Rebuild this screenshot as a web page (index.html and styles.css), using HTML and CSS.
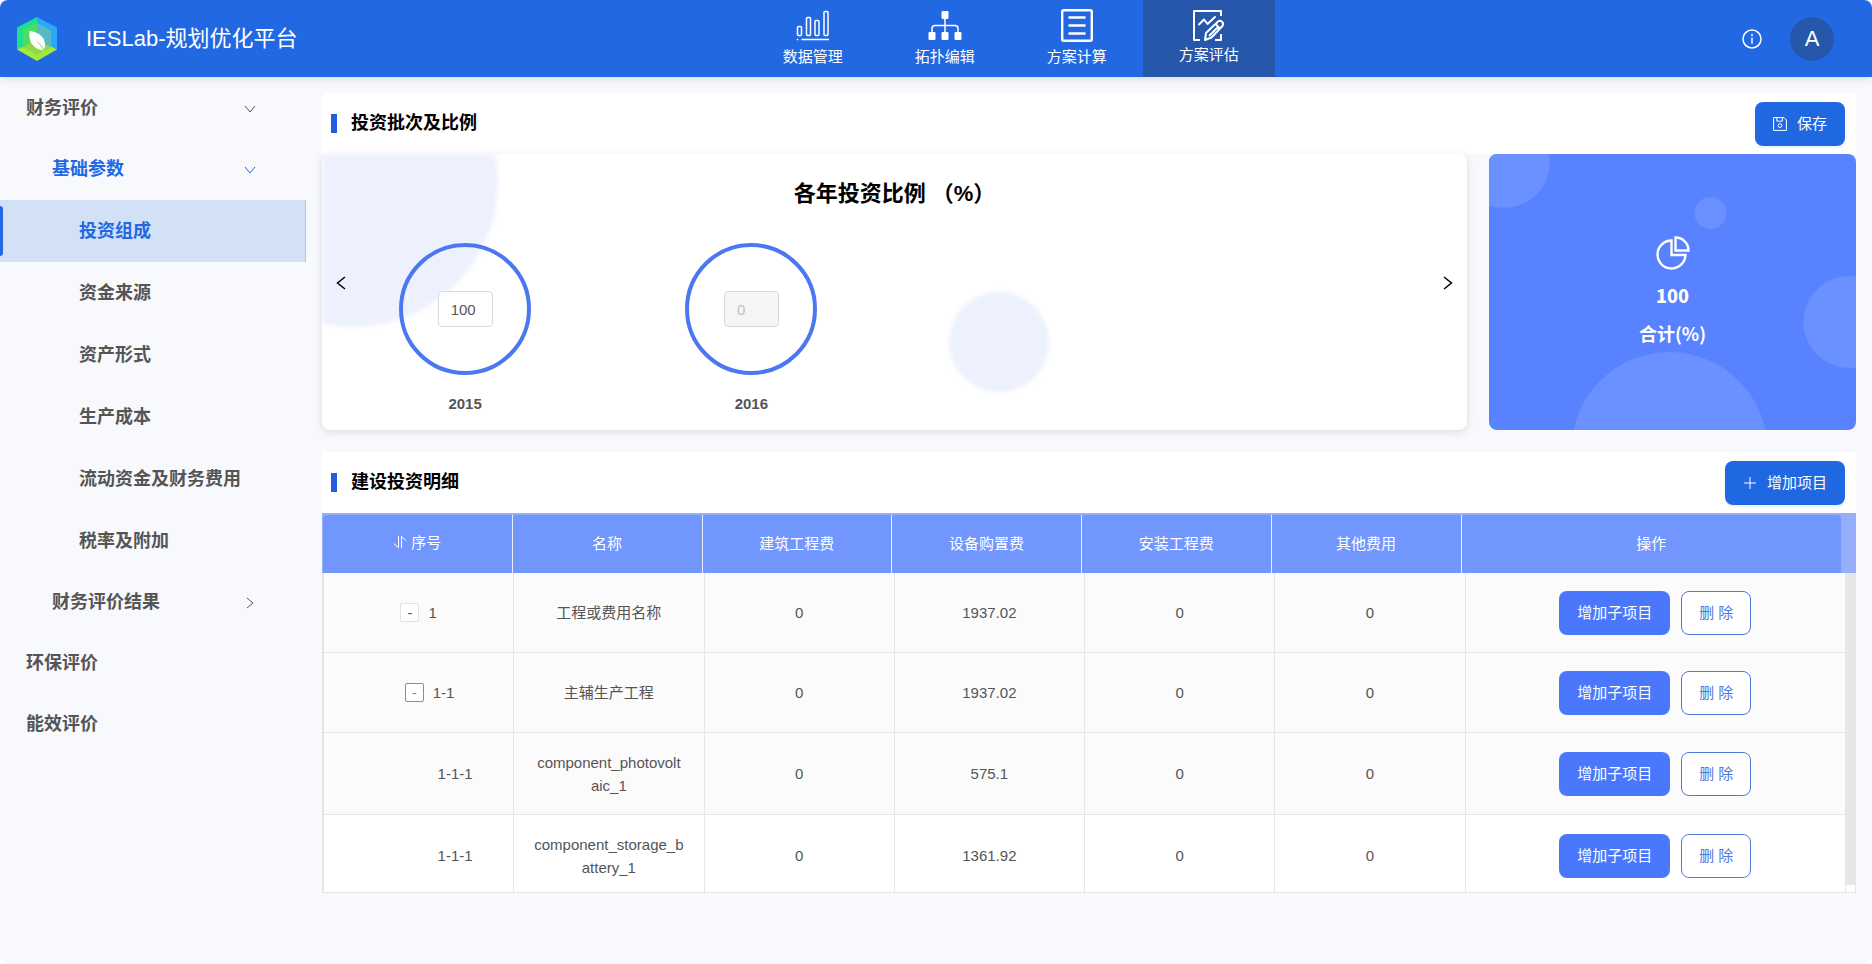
FILE: index.html
```html
<!DOCTYPE html>
<html lang="zh-CN">
<head>
<meta charset="utf-8">
<title>IESLab-规划优化平台</title>
<meta name="viewport" content="width=device-width, initial-scale=1">
<link rel="stylesheet" href="styles.css">
</head>
<body>
<div class="app">
  <header class="topbar">
    <a class="brand" href="#">
      <svg class="brand-logo" viewBox="0 0 40 44" aria-hidden="true">
        <path fill="#1fe08a" d="M20 0 0 10.500v22L20 22z"/>
        <path fill="#2aa9fb" d="M20 0l20 10.500v22L20 22z"/>
        <path fill="#a4ea3c" d="M0 32.500 20 22l20 10.500L20 44z"/>
        <path fill="#4fdc62" d="M20 6 6 13.500v17L20 24z"/>
        <path fill="#5bb9c4" d="M20 6l14 7.500v17L20 24z"/>
        <path fill="#8ddb49" d="M6 30.500 20 22l14 8.500L20 38z"/>
        <path fill="#fff" d="M12.500 14c9 1 16 6 15.500 14.500-.1 2-.8 3.800-1.500 5C18 32 11 27 12.500 14z"/>
        <path fill="none" stroke="#7fd35a" d="M20.500 25c2.500 2 4.500 5 6.500 8.500"/>
      </svg>
      <span class="brand-name">IESLab-规划优化平台</span>
    </a>
    <nav class="modules">
      <a class="module" href="#">
        <svg class="module-icon" viewBox="0 0 34 34" aria-hidden="true"><g fill="none" stroke="#fff" stroke-width="1.500"><rect x="1.500" y="17.500" width="4" height="9" rx="1"/><rect x="10.500" y="8.500" width="4" height="18" rx="1"/><rect x="19" y="11.500" width="4" height="15" rx="1"/><rect x="28" y="2.500" width="4" height="24" rx="1"/><path d="M.8 30.500h1.500M5.500 30.500H33"/></g></svg>
        <span>数据管理</span>
      </a>
      <a class="module" href="#">
        <svg class="module-icon" viewBox="0 0 34 34" aria-hidden="true"><g fill="#fff"><rect x="13.500" y="2" width="7" height="8" rx="1"/><rect x=".5" y="23" width="7" height="8" rx="1"/><rect x="13.500" y="23" width="7" height="8" rx="1"/><rect x="26.500" y="23" width="7" height="8" rx="1"/></g><path fill="none" stroke="#fff" stroke-width="1.500" d="M17 9v15M4 24v-4.500q0-3 3-3h20q3 0 3 3V24"/></svg>
        <span>拓扑编辑</span>
      </a>
      <a class="module" href="#">
        <svg class="module-icon" viewBox="0 0 34 34" aria-hidden="true"><rect x="2.200" y="1.200" width="29.600" height="30.600" rx="1.500" fill="none" stroke="#fff" stroke-width="2.400"/><path d="M9.500 8.500h15M9.500 16.500h15M9.500 24.500h15" stroke="#fff" stroke-width="2.600" stroke-linecap="round"/></svg>
        <span>方案计算</span>
      </a>
      <a class="module module-active" href="#" aria-current="page">
        <svg class="module-icon module-icon-short" viewBox="0 0 34 32" aria-hidden="true"><g fill="none" stroke="#fff" stroke-width="2" stroke-linejoin="round"><path d="M8 31H2V2h27v5M29 25v6h-6"/><path d="M7 15.500l5-5 3.500 4.500L23 8" stroke-linecap="round"/><path d="M13 31l1-7L26 12.500q2-1.500 4 .3t.4 4.200L19.500 28.500zM23.500 15l4.500 4.500M26 18l-9 9"/></g></svg>
        <span>方案评估</span>
      </a>
    </nav>
    <div class="account">
      <button class="icon-button" type="button" aria-label="信息">
        <svg class="info-icon" viewBox="0 0 20 20" aria-hidden="true"><circle cx="10" cy="10" r="9" fill="none" stroke="#fff" stroke-width="1.500"/><path d="M10 8.500v6" stroke="#fff" stroke-width="1.500"/><circle cx="10" cy="6" r="1" fill="#fff"/></svg>
      </button>
      <button class="avatar" type="button">A</button>
    </div>
  </header>

  <div class="layout">
    <nav class="sidebar">
      <a class="menu-item" href="#">财务评价<svg class="chevron" viewBox="0 0 12 12" aria-hidden="true"><path d="M1 3l5 6 5-6"/></svg></a>
      <a class="menu-item menu-sub menu-open" href="#">基础参数<svg class="chevron" viewBox="0 0 12 12" aria-hidden="true"><path d="M1 3l5 6 5-6"/></svg></a>
      <a class="menu-item menu-leaf menu-selected" href="#" aria-current="page">投资组成</a>
      <a class="menu-item menu-leaf" href="#">资金来源</a>
      <a class="menu-item menu-leaf" href="#">资产形式</a>
      <a class="menu-item menu-leaf" href="#">生产成本</a>
      <a class="menu-item menu-leaf" href="#">流动资金及财务费用</a>
      <a class="menu-item menu-leaf" href="#">税率及附加</a>
      <a class="menu-item menu-sub" href="#">财务评价结果<svg class="chevron" viewBox="0 0 12 12" aria-hidden="true"><path d="M3 1l6 5-6 5"/></svg></a>
      <a class="menu-item" href="#">环保评价</a>
      <a class="menu-item" href="#">能效评价</a>
    </nav>

    <main class="content">
      <section>
        <div class="section-head">
          <h2 class="section-title">投资批次及比例</h2>
          <button class="btn btn-main" type="button">
            <svg class="save-icon" viewBox="0 0 14 14" aria-hidden="true"><path d="M.6.600h10.400l2.400 2.400v10.400H.6zM3.800.800v3.400h5.600V.8"/><circle cx="7" cy="8.600" r="1.900"/></svg>
            保存
          </button>
        </div>
        <div class="cards">
          <div class="ratio-card">
            <svg class="ratio-bg" aria-hidden="true"><circle cx="31" cy="28" r="145"/><circle cx="677" cy="188" r="50"/></svg>
            <h3 class="ratio-title">各年投资比例 （%）</h3>
            <div class="slides">
              <div class="slide">
                <div class="ring"><input class="ratio-input" id="y2015" type="text" value="100"></div>
                <label class="year" for="y2015">2015</label>
              </div>
              <div class="slide">
                <div class="ring"><input class="ratio-input" id="y2016" type="text" value="0" disabled></div>
                <label class="year" for="y2016">2016</label>
              </div>
            </div>
            <button class="arrow arrow-prev" type="button" aria-label="上一页"><svg viewBox="0 0 10 14" aria-hidden="true"><path d="M9 1L1.500 7 9 13"/></svg></button>
            <button class="arrow arrow-next" type="button" aria-label="下一页"><svg viewBox="0 0 10 14" aria-hidden="true"><path d="M1 1l7.500 6L1 13"/></svg></button>
          </div>
          <div class="total-card">
            <svg class="total-bg" viewBox="0 0 368 276" preserveAspectRatio="xMidYMid slice" aria-hidden="true"><circle cx="16" cy="9" r="45"/><circle cx="222" cy="59" r="16"/><circle cx="361" cy="168" r="46"/><circle cx="181" cy="296" r="98"/></svg>
            <svg class="pie-icon" viewBox="0 0 34 34" aria-hidden="true"><path d="M15.500 4.500A14 14 0 1 0 29.500 19h-14z"/><path d="M19.500 1.500v13h13a13 13 0 0 0-13-13z"/></svg>
            <strong class="total-value">100</strong>
            <span class="total-label">合计(%)</span>
          </div>
        </div>
      </section>

      <section>
        <div class="section-head">
          <h2 class="section-title">建设投资明细</h2>
          <button class="btn btn-main" type="button">
            <svg class="plus-icon" viewBox="0 0 14 14" aria-hidden="true"><path d="M7 1v12M1 7h12"/></svg>
            增加项目
          </button>
        </div>
        <div class="table-head">
          <table class="grid">
            <colgroup><col span="6" class="col-data"><col class="col-action"></colgroup>
            <thead>
              <tr>
                <th scope="col"><span class="sort"><svg class="sort-icon" viewBox="0 0 14 14" aria-hidden="true"><path d="M.8 8.500l4.700 4.200V1M8.500 13.200V1.500l4.700 4.200"/></svg>序号</span></th>
                <th scope="col">名称</th>
                <th scope="col">建筑工程费</th>
                <th scope="col">设备购置费</th>
                <th scope="col">安装工程费</th>
                <th scope="col">其他费用</th>
                <th scope="col">操作</th>
              </tr>
            </thead>
          </table>
        </div>
        <div class="table-body">
          <table class="grid">
            <colgroup><col span="6" class="col-data"><col class="col-action"></colgroup>
            <tbody>
              <tr>
                <td><span class="tree"><button class="toggle" type="button" aria-label="收起">-</button>1</span></td>
                <td>工程或费用名称</td><td>0</td><td>1937.02</td><td>0</td><td>0</td>
                <td><div class="actions"><button class="btn btn-add" type="button">增加子项目</button><button class="btn btn-del" type="button">删 除</button></div></td>
              </tr>
              <tr>
                <td><span class="tree tree-2"><button class="toggle toggle-focus" type="button" aria-label="收起">-</button>1-1</span></td>
                <td>主辅生产工程</td><td>0</td><td>1937.02</td><td>0</td><td>0</td>
                <td><div class="actions"><button class="btn btn-add" type="button">增加子项目</button><button class="btn btn-del" type="button">删 除</button></div></td>
              </tr>
              <tr class="tall">
                <td><span class="tree tree-3">1-1-1</span></td>
                <td>component_photovolt<wbr>aic_1</td><td>0</td><td>575.1</td><td>0</td><td>0</td>
                <td><div class="actions"><button class="btn btn-add" type="button">增加子项目</button><button class="btn btn-del" type="button">删 除</button></div></td>
              </tr>
              <tr class="tall plain">
                <td><span class="tree tree-3">1-1-1</span></td>
                <td>component_storage_b<wbr>attery_1</td><td>0</td><td>1361.92</td><td>0</td><td>0</td>
                <td><div class="actions"><button class="btn btn-add" type="button">增加子项目</button><button class="btn btn-del" type="button">删 除</button></div></td>
              </tr>
            </tbody>
          </table>
          <div class="scroll-track"><div class="scroll-thumb"></div></div>
        </div>
      </section>
    </main>
  </div>
</div>
</body>
</html>
```
FILE: styles.css
```css
* { box-sizing: border-box; }

html { background: #fff; }

body {
  margin: 0;
  font: 15px/23px "Liberation Sans", "Noto Sans CJK SC", sans-serif;
  color: #555;
}

button, input { font: inherit; color: inherit; }
button { cursor: pointer; }
a { color: inherit; text-decoration: none; }

.app {
  display: flex;
  flex-direction: column;
  min-height: 100vh;
  border-radius: 8px;
  overflow: hidden;
  background: #f8f9fd;
}

/* Top bar */
.topbar {
  display: grid;
  grid-template-columns: 5fr auto 4fr;
  height: 77px;
  background: #2268e2;
  color: #fff;
  box-shadow: 0 2px 8px rgba(0, 0, 0, 0.12);
  z-index: 1;
}

.brand {
  display: flex;
  align-items: center;
  gap: 29px;
  padding-left: 17px;
  font-size: 22px;
}
.brand-logo { width: 40px; height: 44px; }

.modules { display: flex; }
.module {
  display: flex;
  flex-direction: column;
  align-items: center;
  gap: 4px;
  width: 132px;
  padding-top: 9px;
  line-height: 20px;
}
.module-active { background: #2757aa; }
.module-icon { width: 34px; height: 34px; }
.module-icon-short { height: 32px; }

.account {
  display: flex;
  align-items: center;
  justify-content: flex-end;
  gap: 28px;
  padding-right: 38px;
}
.icon-button { display: flex; padding: 0; border: 0; background: none; }
.info-icon { width: 20px; height: 20px; }
.avatar {
  width: 44px;
  height: 44px;
  padding: 0;
  border: 0;
  border-radius: 50%;
  background: #2757aa;
  font-size: 22px;
}

.layout { display: flex; flex: 1; }

/* Side menu */
.sidebar { flex: 0 0 306px; padding-top: 1px; }
.menu-item {
  display: flex;
  align-items: center;
  justify-content: space-between;
  height: 61px;
  padding: 0 50px 0 26px;
  font-size: 18px;
  font-weight: bold;
}
.menu-sub { padding-left: 52px; }
.menu-leaf { height: 62px; padding-left: 79px; }
.menu-open { color: #2268e2; }
.menu-selected {
  position: relative;
  border-right: 1px solid #a9c4ef;
  background: #d3e1f7;
  color: #2268e2;
}
.menu-selected::before {
  content: "";
  position: absolute;
  left: 0;
  top: 6px;
  bottom: 6px;
  width: 3px;
  border-radius: 0 3px 3px 0;
  background: #2268e2;
}
.chevron { width: 12px; height: 12px; fill: none; stroke: currentColor; }

/* Content */
.content {
  display: flex;
  flex-direction: column;
  gap: 22px;
  flex: 1;
  min-width: 0;
  padding: 16px 16px 24px;
}
.section-head {
  display: flex;
  align-items: center;
  justify-content: space-between;
  height: 61px;
  padding: 0 11px 0 9px;
  background: #fff;
}
.section-title {
  display: flex;
  align-items: center;
  gap: 14px;
  margin: 0;
  font-size: 18px;
  color: #000;
}
.section-title::before {
  content: "";
  width: 6px;
  height: 19px;
  background: #265ce0;
}

.btn {
  display: inline-flex;
  align-items: center;
  justify-content: center;
  height: 44px;
  padding: 0 17px;
  border: 1px solid transparent;
  border-radius: 8px;
  white-space: nowrap;
}
.btn-main {
  gap: 10px;
  background: #2068e1;
  color: #fff;
  box-shadow: 0 2px 2px rgba(32, 104, 225, 0.1);
}
.btn-add { background: #4a77fb; color: #fff; }
.btn-del { border-color: #4f78dc; background: #fff; color: #4f78dc; }
.save-icon { width: 14px; height: 14px; fill: none; stroke: #fff; }
.plus-icon { width: 14px; height: 14px; stroke: #fff; }

.cards { display: grid; grid-template-columns: 1145fr 367fr; gap: 22px; }
.ratio-card {
  position: relative;
  height: 276px;
  border-radius: 8px;
  overflow: hidden;
  background: #fff;
  box-shadow: 0 2px 8px rgba(0, 0, 0, 0.12);
}
.ratio-bg {
  position: absolute;
  inset: 0;
  width: 100%;
  height: 100%;
  fill: #edf1fe;
  filter: blur(2px);
}
.ratio-title {
  position: relative;
  margin: 0;
  padding-top: 24px;
  font-size: 22px;
  line-height: 32px;
  text-align: center;
  color: #000;
}
.slides {
  position: relative;
  display: grid;
  grid-template-columns: repeat(4, 1fr);
  padding-top: 33px;
}
.slide { display: flex; flex-direction: column; align-items: center; gap: 17px; }
.ring {
  display: flex;
  align-items: center;
  justify-content: center;
  width: 132px;
  height: 132px;
  border: 4px solid #4b78f1;
  border-radius: 50%;
}
.ratio-input {
  width: 55px;
  height: 36px;
  padding: 0 12px;
  border: 1px solid #d9d9d9;
  border-radius: 4px;
  background: #fff;
}
.ratio-input:disabled { background: #f5f5f5; color: #bfbfbf; }
.year { font-weight: bold; }

.arrow {
  position: absolute;
  top: 122px;
  display: flex;
  padding: 0;
  border: 0;
  background: none;
}
.arrow svg { width: 10px; height: 14px; fill: none; stroke: #000; stroke-width: 1.5; }
.arrow-prev { left: 14px; }
.arrow-next { right: 14px; }

.total-card {
  position: relative;
  display: flex;
  flex-direction: column;
  align-items: center;
  padding-top: 82px;
  border-radius: 8px;
  overflow: hidden;
  background: #5882ff;
  color: #fff;
  font-family: "Noto Sans CJK SC", sans-serif;
  font-size: 18px;
  font-weight: bold;
}
.total-bg { position: absolute; inset: 0; width: 100%; height: 100%; fill: #6a91ff; }
.pie-icon {
  position: relative;
  width: 34px;
  height: 34px;
  fill: none;
  stroke: #fff;
  stroke-width: 2.4;
}
.total-value, .total-label { position: relative; line-height: 38px; }
.total-value { padding-top: 6px; }

/* Detail table */
.grid { width: 100%; border-collapse: separate; border-spacing: 0; table-layout: fixed; }
.col-data { width: 12.5%; }
.col-action { width: 25%; }

.table-head { padding: 2px 15px 0 1px; background: #96aefc; }
.table-head .grid { background: #7196fd; border-radius: 4px 4px 0 0; }
.grid th {
  height: 58px;
  padding: 0 0 2px;
  border-right: 1px solid #e9effe;
  font-weight: normal;
  color: #fff;
}
.grid th:last-child { border-right: 0; }
.sort { display: inline-flex; align-items: center; gap: 4px; }
.sort-icon { width: 14px; height: 14px; fill: none; stroke: #fff; }

.table-body {
  display: flex;
  max-height: 320px;
  overflow: hidden;
  border: 1px solid #e6e6e6;
  border-width: 0 1px 1px 2px;
  background: #fff;
}
.table-body .grid { flex: 1; }
.grid td {
  height: 80px;
  padding: 0 18px;
  border-right: 1px solid #e6e6e6;
  border-bottom: 1px solid #e6e6e6;
  background: #fbfbfb;
  text-align: center;
}
.grid .tall td { height: 82px; }
.grid .plain td { background: #fff; }

.tree { display: inline-flex; align-items: center; gap: 9px; }
.tree-2 { padding-left: 22px; }
.tree-3 { padding-left: 73px; }
.toggle {
  width: 19px;
  height: 19px;
  padding: 0;
  border: 1px solid #e2e2e2;
  border-radius: 2px;
  background: #fff;
  line-height: 16px;
}
.toggle-focus { border-color: #4b9be6; color: #4b9be6; }
.actions { display: flex; justify-content: center; gap: 11px; }

.scroll-track { flex: 0 0 9px; height: 319px; padding-bottom: 7px; }
.scroll-thumb { height: 100%; background: #e7e7e7; }
```
